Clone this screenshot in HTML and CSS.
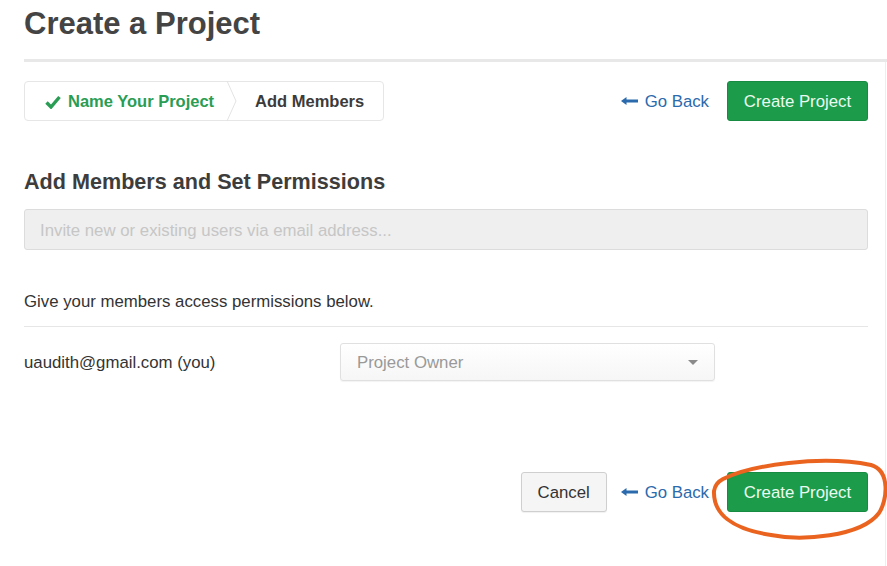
FILE: index.html
```html
<!DOCTYPE html>
<html>
<head>
<meta charset="utf-8">
<link rel="stylesheet" href="styles.css">
</head>
<body>
<header class="title-bar"><h1>Create a Project</h1></header>
<main class="content">
  <div class="toolbar">
    <nav class="steps">
      <div class="step done">
        <svg class="check" width="16" height="14" viewBox="0 0 16 14"><path d="M1.5 7.5 L6 12 L14.5 2" fill="none" stroke="#2a9d55" stroke-width="3.4" stroke-linejoin="miter"/></svg>
        <span>Name Your Project</span>
      </div>
      <svg class="chev" width="12" height="40" viewBox="0 0 12 40"><path d="M1 0 L10 20 L1 40" fill="none" stroke="#e3e3e3" stroke-width="1"/></svg>
      <div class="step current">Add Members</div>
    </nav>
    <div class="actions">
      <a class="back" href="#"><svg width="17" height="10" viewBox="0 0 17 10"><path d="M0 5 L5.5 1 L5.5 3.4 L17 3.4 L17 6.6 L5.5 6.6 L5.5 9 Z" fill="#2a6aad"/></svg>Go Back</a>
      <button class="btn btn-green">Create Project</button>
    </div>
  </div>

  <h2>Add Members and Set Permissions</h2>
  <div class="invite">Invite new or existing users via email address...</div>

  <p class="hint">Give your members access permissions below.</p>
  <div class="rule"></div>

  <div class="member">
    <span class="email">uaudith@gmail.com (you)</span>
    <div class="select">
      <span>Project Owner</span>
      <span class="caret"></span>
    </div>
  </div>

  <div class="footer">
    <button class="btn btn-default">Cancel</button>
    <a class="back" href="#"><svg width="17" height="10" viewBox="0 0 17 10"><path d="M0 5 L5.5 1 L5.5 3.4 L17 3.4 L17 6.6 L5.5 6.6 L5.5 9 Z" fill="#2a6aad"/></svg>Go Back</a>
    <div class="highlight">
      <button class="btn btn-green">Create Project</button>
      <svg class="circle" width="180" height="86" viewBox="0 0 180 86"><path d="M12 22 C 40 8, 110 -2, 160 8 C 180 14, 176 44, 168 56 C 150 80, 90 84, 60 78 C 20 72, 2 56, 3 34 C 4 28, 8 24, 12 22" fill="none" stroke="#ea6420" stroke-width="4" stroke-linecap="round"/></svg>
    </div>
  </div>
</main>
</body>
</html>
```
FILE: styles.css
```css
* { box-sizing: border-box; }
html, body { margin: 0; padding: 0; background: #fff; }
body {
  font-family: "Liberation Sans", Arial, sans-serif;
  font-size: 16.8px;
  color: #333;
  width: 887px;
  overflow: hidden;
}
.title-bar {
  margin-left: 24px;
  padding-top: 6px;
  padding-bottom: 17px;
  border-bottom: 3px solid #e8e8e8;
}
.title-bar h1 {
  margin: 0;
  font-size: 31px;
  line-height: 36px;
  font-weight: bold;
  color: #444;
}
.content {
  margin-left: 24px;
  margin-right: 1px;
  padding-right: 17px;
  border-right: 1px solid #eeeeee;
  padding-top: 19px;
  padding-bottom: 60px;
  display: flex;
  flex-direction: column;
}
.toolbar {
  display: flex;
  justify-content: space-between;
  align-items: center;
  height: 40px;
}
.steps {
  display: flex;
  align-items: center;
  height: 40px;
  border: 1px solid #e6e6e6;
  border-radius: 4px;
  font-weight: bold;
  font-size: 16.5px;
  padding-top: 1px;
}
.step { display: flex; align-items: center; }
.step.done { color: #2a9d55; padding-left: 20px; padding-right: 12px; }
.step.done .check { margin-right: 7px; }
.step.current { color: #3b3b3b; padding-left: 17px; padding-right: 19px; }
.chev { display: block; margin-top: -1px; }
.actions { display: flex; align-items: center; gap: 18px; }
.back {
  display: flex;
  align-items: center;
  gap: 7px;
  color: #2a6aad;
  text-decoration: none;
  font-size: 16.8px;
  padding-top: 1px;
}
.back svg { margin-top: -1px; }
.btn {
  font-family: "Liberation Sans", Arial, sans-serif;
  font-size: 16.8px;
  height: 40px;
  border-radius: 3px;
  cursor: pointer;
  padding: 2px 0 0;
}
.btn-green {
  background: #1c9c4b;
  border: 1px solid #178b41;
  color: #eafaf0;
  width: 141px;
}
.btn-default {
  background: #f5f5f5;
  border: 1px solid #cfcfcf;
  color: #333;
  width: 86px;
  box-shadow: 0 1px 1px rgba(0,0,0,0.06);
}
h2 {
  margin: 48px 0 0;
  font-size: 21.6px;
  line-height: 26px;
  font-weight: bold;
  color: #3d3d3d;
}
.invite {
  margin-top: 14px;
  height: 41px;
  background: #efefef;
  border: 1px solid #dcdcdc;
  border-radius: 3px;
  padding: 2px 0 0 15px;
  display: flex;
  align-items: center;
  color: #c6c6c6;
}
.hint {
  margin: 40px 0 0;
  line-height: 24px;
}
.rule {
  margin-top: 12px;
  height: 1px;
  background: #e6e6e6;
}
.member {
  margin-top: 16px;
  display: flex;
  align-items: center;
}
.email { width: 316px; padding-top: 2px; }
.select {
  width: 375px;
  height: 38px;
  border: 1px solid #e0e0e0;
  border-radius: 3px;
  background: linear-gradient(#ffffff, #f6f6f6);
  box-shadow: 0 1px 1px rgba(0,0,0,0.05);
  display: flex;
  align-items: center;
  justify-content: space-between;
  padding: 2px 16px 0 16px;
  color: #999;
}
.caret {
  width: 0; height: 0;
  border-left: 5px solid transparent;
  border-right: 5px solid transparent;
  border-top: 5px solid #8a8a8a;
  margin-top: -2px;
}
.footer {
  margin-top: 91px;
  display: flex;
  justify-content: flex-end;
  align-items: center;
  gap: 14px;
}
.footer .back { margin-right: 4px; }
.highlight { position: relative; }
.circle {
  position: absolute;
  left: -16px;
  top: -15px;
  pointer-events: none;
}
```
